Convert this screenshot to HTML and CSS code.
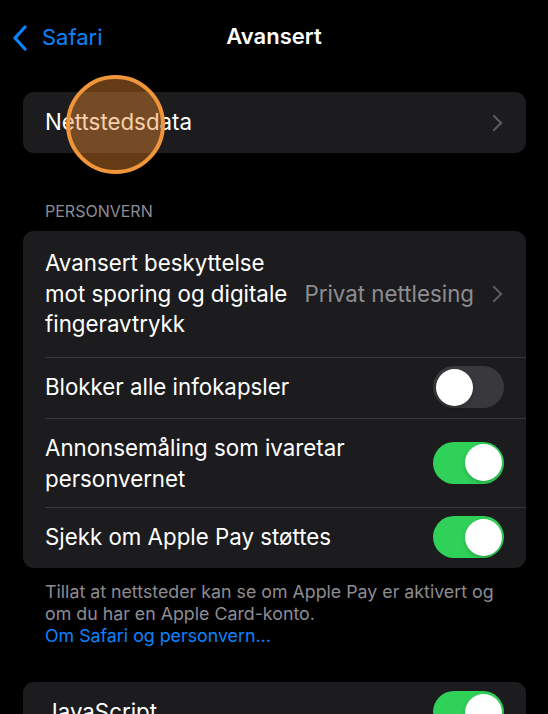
FILE: index.html
```html
<!DOCTYPE html>
<html lang="nb">
<head>
    <meta charset="UTF-8">
    <meta name="viewport" content="width=device-width, initial-scale=1.0">
    <title>Avansert</title>
    <link rel="stylesheet" href="styles.css">
</head>
<body>

    <!-- Navigation bar -->
    <div class="nav">
        <a class="back" href="#">
            <svg class="back-icon" width="16" height="26" viewBox="0 0 16 26">
                <path d="M13 2 L3 13 L13 24" fill="none" stroke="#0a84ff" stroke-width="3.2" stroke-linecap="round" stroke-linejoin="round"/>
            </svg>
            <span>Safari</span>
        </a>
        <div class="nav-title">Avansert</div>
    </div>

    <div class="content">
        <div class="group">
            <div class="row link-row">
                <span class="label">Nettstedsdata</span>
                <span class="chevron"></span>
            </div>
        </div>

        <div class="section-header">PERSONVERN</div>
        <div class="group">
            <div class="row link-row tall">
                <span class="label">Avansert beskyttelse<br>mot sporing og digitale<br>fingeravtrykk</span>
                <span class="detail">Privat nettlesing</span>
                <span class="chevron"></span>
            </div>
            <div class="row">
                <span class="label">Blokker alle infokapsler</span>
                <span class="toggle"></span>
            </div>
            <div class="row two-line">
                <span class="label">Annonsemåling som ivaretar<br>personvernet</span>
                <span class="toggle on"></span>
            </div>
            <div class="row">
                <span class="label">Sjekk om Apple Pay støttes</span>
                <span class="toggle on"></span>
            </div>
        </div>
        <div class="section-footer">
            Tillat at nettsteder kan se om Apple Pay er aktivert og<br>om du har en Apple Card-konto.
            <a href="#">Om Safari og personvern...</a>
        </div>

        <div class="group">
            <div class="row">
                <span class="label">JavaScript</span>
                <span class="toggle on"></span>
            </div>
        </div>
    </div>

    <!-- Touch indicator -->
    <div class="touch"></div>

</body>
</html>
```

FILE: styles.css
```css
:root {
    --bg: #000000;
    --cell: #1c1c1e;
    --separator: #38383a;
    --text: #ffffff;
    --secondary: #8d8d93;
    --blue: #0a84ff;
    --green: #30d158;
    --toggle-off: #39393d;
}

body {
    margin: 0;
    background: var(--bg);
    color: var(--text);
    font-family: Inter, "Noto Sans", Arial, sans-serif;
    overflow: hidden;
}

.nav {
    position: relative;
    height: 72px;
    display: flex;
    align-items: center;
    justify-content: center;
}

.back {
    position: absolute;
    left: 12px;
    top: 23px;
    display: flex;
    align-items: center;
    gap: 14px;
    color: var(--blue);
    text-decoration: none;
    font-size: 22px;
}

.back-icon {
    margin-top: 2px;
}

.nav-title {
    font-size: 22px;
    font-weight: 600;
}

.content {
    padding: 20px 22px 0 23px;
}

.group {
    background: var(--cell);
    border-radius: 11px;
    overflow: hidden;
}

.row {
    display: flex;
    align-items: center;
    min-height: 61px;
    padding: 0 22px;
    box-sizing: border-box;
    font-size: 22.3px;
    line-height: 30.5px;
    position: relative;
}

.row + .row::before {
    content: "";
    position: absolute;
    top: 0;
    left: 22px;
    right: 0;
    height: 1px;
    background: var(--separator);
}

.row.tall {
    padding-top: 17px;
    padding-bottom: 17px;
}

.row.two-line {
    line-height: 31px;
    padding-top: 14px;
    padding-bottom: 13px;
}

.label {
    flex: 1;
}

.detail {
    color: var(--secondary);
    margin-right: 14px;
}

.chevron {
    width: 10px;
    height: 10px;
    border-right: 2.5px solid #5b5b60;
    border-top: 2.5px solid #5b5b60;
    transform: rotate(45deg);
    margin-right: 4px;
}

.toggle {
    width: 71px;
    height: 42px;
    border-radius: 21px;
    background: var(--toggle-off);
    position: relative;
    flex-shrink: 0;
}

.toggle::after {
    content: "";
    position: absolute;
    top: 2.5px;
    left: 2.5px;
    width: 37px;
    height: 37px;
    border-radius: 50%;
    background: #fff;
    box-shadow: 0 2px 4px rgba(0, 0, 0, 0.2);
}

.toggle.on {
    background: var(--green);
}

.toggle.on::after {
    left: 31.5px;
}

.section-header {
    color: var(--secondary);
    font-size: 16px;
    line-height: 20px;
    padding: 48px 0 10px 22px;
}

.section-footer {
    color: var(--secondary);
    font-size: 17.8px;
    line-height: 22px;
    padding: 13px 22px 35px 22px;
}

.section-footer a {
    color: var(--blue);
    text-decoration: none;
    display: block;
}

.touch {
    position: absolute;
    left: 66px;
    top: 75px;
    width: 99px;
    height: 99px;
    box-sizing: border-box;
    border-radius: 50%;
    border: 4.5px solid #f0953a;
    background: rgba(240, 140, 50, 0.42);
}
```
